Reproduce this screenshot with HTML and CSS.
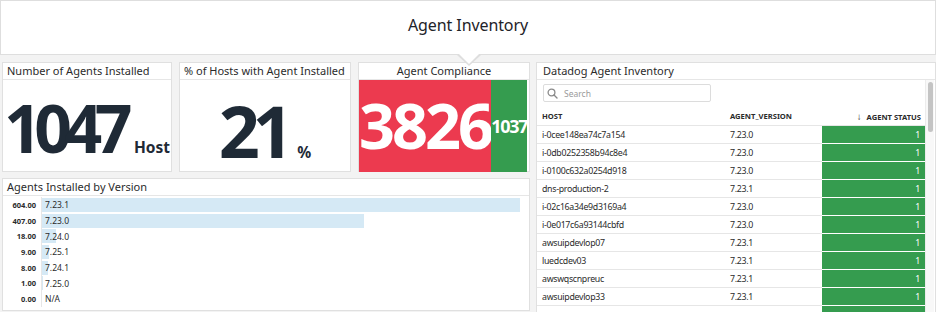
FILE: index.html
```html
<!DOCTYPE html>
<html lang="en">
<head>
    <meta charset="UTF-8">
    <meta name="viewport" content="width=device-width, initial-scale=1.0">
    <title>Agent Inventory</title>
    <link rel="stylesheet" href="styles.css">
</head>
<body>
    <div class="banner">
        <h1>Agent Inventory</h1>
    </div>

    <div class="grid">
        <div class="left">
            <div class="top-row">
                <div class="card qv">
                    <div class="card-title">Number of Agents Installed</div>
                    <div class="qv-body">
                        <span class="qv-num">1047</span>
                        <span class="qv-unit">Host</span>
                    </div>
                </div>

                <div class="card qv qv-wide">
                    <div class="card-title">% of Hosts with Agent Installed</div>
                    <div class="qv-body">
                        <span class="qv-num">21</span>
                        <span class="qv-unit">%</span>
                    </div>
                </div>

                <div class="card compliance">
                    <div class="card-title center">Agent Compliance</div>
                    <div class="comp-body">
                        <div class="comp-bad">3826</div>
                        <div class="comp-good">1037</div>
                    </div>
                </div>
            </div>

            <div class="card bars">
                <div class="card-title">Agents Installed by Version</div>
                <div class="bar-list">
                    <div class="bar-row"><span class="bar-val">604.00</span><div class="bar-track"><div class="bar-fill" style="width: 478px"></div><span class="bar-label">7.23.1</span></div></div>
                    <div class="bar-row"><span class="bar-val">407.00</span><div class="bar-track"><div class="bar-fill" style="width: 322px"></div><span class="bar-label">7.23.0</span></div></div>
                    <div class="bar-row"><span class="bar-val">18.00</span><div class="bar-track"><div class="bar-fill" style="width: 14px"></div><span class="bar-label">7.24.0</span></div></div>
                    <div class="bar-row"><span class="bar-val">9.00</span><div class="bar-track"><div class="bar-fill" style="width: 7px"></div><span class="bar-label">7.25.1</span></div></div>
                    <div class="bar-row"><span class="bar-val">8.00</span><div class="bar-track"><div class="bar-fill" style="width: 6px"></div><span class="bar-label">7.24.1</span></div></div>
                    <div class="bar-row"><span class="bar-val">1.00</span><div class="bar-track"><div class="bar-fill" style="width: 1px"></div><span class="bar-label">7.25.0</span></div></div>
                    <div class="bar-row"><span class="bar-val">0.00</span><div class="bar-track"><div class="bar-fill" style="width: 0px"></div><span class="bar-label">N/A</span></div></div>
                </div>
            </div>
        </div>

        <div class="card inventory">
            <div class="card-title wide-pad">Datadog Agent Inventory</div>
            <div class="inv-body">
                <div class="inv-main">
                    <div class="search">
                        <svg width="11" height="11" viewBox="0 0 11 11">
                            <circle cx="4.5" cy="4.5" r="3.4" fill="none" stroke="#8a8a8a" stroke-width="1.3"/>
                            <line x1="7" y1="7" x2="10" y2="10" stroke="#8a8a8a" stroke-width="1.4" stroke-linecap="round"/>
                        </svg>
                        <span>Search</span>
                    </div>

                    <table class="inv-table">
                        <thead>
                            <tr>
                                <th class="c-host">HOST</th>
                                <th class="c-ver">AGENT_VERSION</th>
                                <th class="c-status"><span class="sort">&#8595;</span> AGENT STATUS</th>
                            </tr>
                        </thead>
                        <tbody>
                            <tr><td>i-0cee148ea74c7a154</td><td>7.23.0</td><td class="ok">1</td></tr>
                            <tr><td>i-0db0252358b94c8e4</td><td>7.23.0</td><td class="ok">1</td></tr>
                            <tr><td>i-0100c632a0254d918</td><td>7.23.0</td><td class="ok">1</td></tr>
                            <tr><td>dns-production-2</td><td>7.23.1</td><td class="ok">1</td></tr>
                            <tr><td>i-02c16a34e9d3169a4</td><td>7.23.0</td><td class="ok">1</td></tr>
                            <tr><td>i-0e017c6a93144cbfd</td><td>7.23.0</td><td class="ok">1</td></tr>
                            <tr><td>awsuipdevlop07</td><td>7.23.1</td><td class="ok">1</td></tr>
                            <tr><td>luedcdev03</td><td>7.23.1</td><td class="ok">1</td></tr>
                            <tr><td>awswqscnpreuc</td><td>7.23.1</td><td class="ok">1</td></tr>
                            <tr><td>awsuipdevlop33</td><td>7.23.1</td><td class="ok">1</td></tr>
                            <tr><td>&nbsp;</td><td>&nbsp;</td><td class="ok">&nbsp;</td></tr>
                        </tbody>
                    </table>
                </div>
                <div class="scroll-track">
                    <div class="scroll-thumb"></div>
                </div>
            </div>
        </div>
    </div>
</body>
</html>
```

FILE: styles.css
```css
body {
    margin: 0;
    height: 312px;
    overflow: hidden;
    background-color: #f3f3f3;
    font-family: "Noto Sans", "Open Sans", sans-serif;
    color: #2d2d2d;
}

.banner {
    position: relative;
    height: 53px;
    border: 1px solid #dedede;
    background-color: #fff;
    display: flex;
    justify-content: center;
    align-items: center;
}

.banner h1 {
    margin: 0 0 5px 0;
    font-size: 16px;
    font-weight: 400;
    color: #1e2329;
    letter-spacing: -0.1px;
}

/* little pointer under the banner */
.banner::before,
.banner::after {
    content: "";
    position: absolute;
    width: 0;
    height: 0;
    z-index: 2;
}

.banner::before {
    left: 456px;
    top: 54px;
    border-left: 12px solid transparent;
    border-right: 12px solid transparent;
    border-top: 11px solid #dedede;
}

.banner::after {
    left: 458px;
    top: 53px;
    border-left: 10px solid transparent;
    border-right: 10px solid transparent;
    border-top: 10px solid #fff;
}

.grid {
    display: flex;
    gap: 6px;
    margin-top: 7px;
    padding-left: 2px;
}

.left {
    width: 528px;
    display: flex;
    flex-direction: column;
    gap: 6px;
}

.top-row {
    display: flex;
    gap: 7px;
}

.card {
    background-color: #fff;
    border: 1px solid #e0e0e0;
    box-sizing: border-box;
}

.card-title {
    height: 16px;
    line-height: 16px;
    padding: 0 4px;
    font-size: 11px;
    color: #2b2b2b;
    border-bottom: 1px solid #e6e6e6;
    white-space: nowrap;
    overflow: hidden;
}

.card-title.center {
    text-align: center;
}

.card-title.wide-pad {
    padding-left: 6px;
}

/* query values */
.qv {
    width: 170px;
    height: 110px;
}

.qv-wide {
    width: 172px;
}

.qv-body {
    display: flex;
    justify-content: center;
    align-items: baseline;
    padding-top: 14px;
    color: #1f2a36;
    font-weight: 700;
}

.qv-num {
    font-size: 66px;
    line-height: 1;
    letter-spacing: -7.5px;
}

.qv-wide .qv-num {
    font-size: 72px;
    letter-spacing: -7.5px;
}

.qv-unit {
    font-size: 15.5px;
    margin-left: 9px;
}

.qv-wide .qv-unit {
    margin-left: 11px;
}

/* compliance */
.compliance {
    width: 172px;
    height: 110px;
}

.comp-body {
    display: flex;
    height: 92px;
    padding-right: 2px;
    color: #fff;
    font-weight: 700;
}

.comp-bad {
    width: 135px;
    background-color: #ec3a4f;
    display: flex;
    justify-content: center;
    align-items: center;
    font-size: 63px;
    letter-spacing: -3px;
    line-height: 1;
    padding-bottom: 4px;
    box-sizing: border-box;
}

.comp-good {
    flex: 1;
    background-color: #359c4f;
    display: flex;
    justify-content: center;
    align-items: center;
    font-size: 18px;
    letter-spacing: -1.3px;
    white-space: nowrap;
}

/* bars */
.bars {
    height: 133px;
}

.bar-list {
    padding-top: 1px;
}

.bar-row {
    display: flex;
    height: 15.7px;
    align-items: center;
}

.bar-val {
    width: 33px;
    margin-right: 5px;
    text-align: right;
    font-size: 7.5px;
    font-weight: 700;
    color: #2b2b2b;
}

.bar-track {
    flex: 1;
    height: 100%;
    border-left: 1px solid #e6e6e6;
    display: grid;
    align-items: center;
}

.bar-fill,
.bar-label {
    grid-area: 1 / 1;
}

.bar-fill {
    height: 14px;
    background-color: #d5e9f5;
}

.bar-label {
    padding-left: 3px;
    font-size: 8.5px;
    color: #2b2b2b;
}

/* inventory table */
.inventory {
    width: 400px;
    height: 270px;
}

.inv-body {
    display: flex;
}

.inv-main {
    width: 388px;
}

.search {
    margin: 4px 0 0 6px;
    width: 168px;
    height: 18px;
    border: 1px solid #dcdcdc;
    border-radius: 2px;
    box-sizing: border-box;
    display: flex;
    align-items: center;
    gap: 6px;
    padding-left: 3px;
    font-size: 8.5px;
    color: #9a9a9a;
}

.inv-table {
    margin-top: 5px;
    width: 388px;
    border-collapse: collapse;
    table-layout: fixed;
}

.inv-table th {
    height: 18px;
    padding: 0 5px;
    font-size: 7.6px;
    font-weight: 700;
    color: #2b2b2b;
    text-align: left;
    border-bottom: 1px solid #e6e6e6;
    white-space: nowrap;
}

.sort {
    font-size: 9.5px;
    margin-right: 3px;
}

.inv-table td {
    height: 17px;
    padding: 0 5px;
    font-size: 8.8px;
    letter-spacing: -0.3px;
    color: #2b2b2b;
    border-bottom: 1px solid #e6e6e6;
    white-space: nowrap;
}

.c-host {
    width: 178px;
}

.c-ver {
    width: 87px;
}

.inv-table th.c-status {
    text-align: right;
    padding-right: 4px;
}

.inv-table td.ok {
    background-color: #359c4f;
    color: #fff;
    text-align: right;
    padding-right: 5px;
    border-bottom: 1px solid #fff;
}

.scroll-track {
    width: 8px;
    height: 240px;
    border-left: 1px solid #ececec;
    background-color: #f8f8f8;
}

.scroll-thumb {
    width: 5px;
    height: 50px;
    margin: 2px 0 0 2px;
    border-radius: 3px;
    background-color: #c4c4c4;
}
```
